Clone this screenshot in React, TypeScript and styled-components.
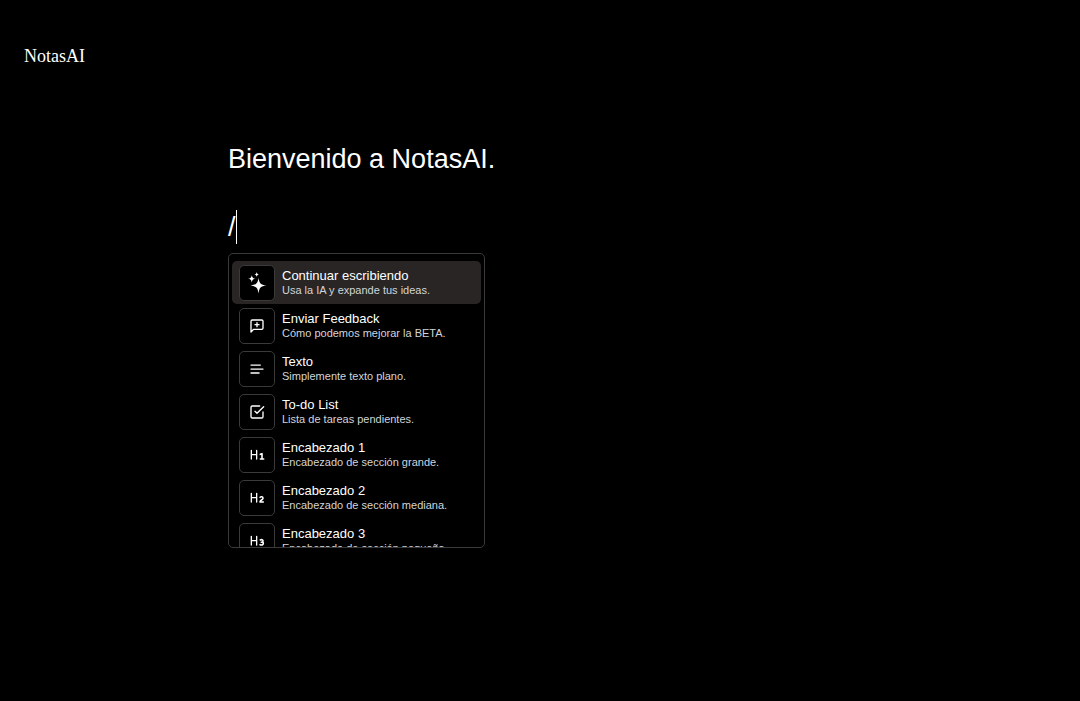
import React from 'react';
import styled, { createGlobalStyle } from 'styled-components';

const GlobalStyle = createGlobalStyle`
  * { box-sizing: border-box; }
  body {
    margin: 0;
    background: #000;
    color: #fff;
    font-family: "Liberation Sans", Arial, sans-serif;
  }
`;

const Header = styled.header`
  display: flex;
  padding: 46px 24px 0;
`;

const Brand = styled.a`
  color: #fff;
  font: 18px/20px "Liberation Serif", "Times New Roman", serif;
  text-decoration: none;
`;

const Editor = styled.main`
  max-width: 624px;
  margin: 0 auto;
  padding-top: 76px;
`;

const Title = styled.h1`
  margin: 0 0 32px;
  font-size: 27px;
  line-height: 34px;
  font-weight: 400;
`;

const CommandLine = styled.div`
  display: flex;
  align-items: center;
  font-size: 27px;
  line-height: 38px;
`;

const Caret = styled.span`
  width: 1px;
  height: 34px;
  background: #fff;
`;

const Menu = styled.div`
  width: 257px;
  height: 295px;
  margin-top: 7px;
  padding: 7px 3px;
  overflow: hidden;
  border: 1px solid #3a3a3a;
  border-radius: 5px;
`;

const Item = styled.button<{ $active?: boolean }>`
  display: flex;
  align-items: center;
  gap: 7px;
  width: 100%;
  height: 43px;
  padding: 0 7px;
  border: 0;
  border-radius: 5px;
  background: ${(p) => (p.$active ? '#292524' : 'transparent')};
  color: #fff;
  font-family: inherit;
  text-align: left;
  cursor: pointer;
`;

const IconBox = styled.span`
  display: flex;
  flex: none;
  align-items: center;
  justify-content: center;
  width: 36px;
  height: 36px;
  border: 1px solid #3a3a3a;
  border-radius: 5px;
  background: #000;
`;

const Labels = styled.span`
  display: flex;
  flex-direction: column;
  white-space: nowrap;
`;

const Name = styled.span`
  font-size: 13px;
  line-height: 15px;
`;

const Description = styled.span`
  color: #d1d5db;
  font-size: 11px;
  line-height: 15px;
`;

const Icon = ({ children }: { children: React.ReactNode }) => (
  <svg
    width="16"
    height="16"
    viewBox="0 0 24 24"
    fill="none"
    stroke="currentColor"
    strokeWidth="2"
    strokeLinecap="round"
    strokeLinejoin="round"
    aria-hidden="true"
  >
    {children}
  </svg>
);

const HeadingIcon = ({ digit }: { digit: string }) => (
  <Icon>
    <path d="M3.5 11.5h8M3.5 18V5M11.5 18V5" />
    <path d={digit} strokeWidth="2.4" />
  </Icon>
);

const Sparkles = () => (
  <svg width="20" height="22" viewBox="0 0 20 22" fill="currentColor" aria-hidden="true">
    <path d="M11.5 6C12.4 11.5 13.500 12.600 19.500 13.500C13.500 14.400 12.400 15.500 11.500 21.500C10.600 15.500 9.500 14.400 3.500 13.500C9.500 12.600 10.600 11.500 11.500 6Z" />
    <path d="M4.800 3.200C5.300 5.800 6 6.400 8.500 6.800C6 7.200 5.300 7.800 4.800 10.400C4.300 7.800 3.600 7.200 1 6.800C3.600 6.400 4.300 5.800 4.800 3.200Z" />
    <path d="M9.700 0C10 1.700 10.500 2.200 12 2.400C10.500 2.700 10 3.200 9.700 4.800C9.400 3.200 8.900 2.700 7.300 2.400C8.900 2.200 9.400 1.700 9.700 0Z" />
  </svg>
);

const items = [
  { name: 'Continuar escribiendo', description: 'Usa la IA y expande tus ideas.', icon: <Sparkles /> },
  {
    name: 'Enviar Feedback',
    description: 'Cómo podemos mejorar la BETA.',
    icon: (
      <Icon>
        <path d="M21 15a2 2 0 0 1-2 2H7l-4 4V5a2 2 0 0 1 2-2h14a2 2 0 0 1 2 2z" />
        <path d="M9 10h6M12 7v6" />
      </Icon>
    ),
  },
  {
    name: 'Texto',
    description: 'Simplemente texto plano.',
    icon: (
      <Icon>
        <path d="M17 6.1H3M21 12.1H3M15.1 18H3" />
      </Icon>
    ),
  },
  {
    name: 'To-do List',
    description: 'Lista de tareas pendientes.',
    icon: (
      <Icon>
        <path d="m9 11 3 3L22 4" />
        <path d="M21 12v7a2 2 0 0 1-2 2H5a2 2 0 0 1-2-2V5a2 2 0 0 1 2-2h11" />
      </Icon>
    ),
  },
  {
    name: 'Encabezado 1',
    description: 'Encabezado de sección grande.',
    icon: <HeadingIcon digit="M17 11l2.500-1v8M17 18h5" />,
  },
  {
    name: 'Encabezado 2',
    description: 'Encabezado de sección mediana.',
    icon: <HeadingIcon digit="M21.500 18h-5c0-3 4.500-3 4.500-5.700 0-2.300-3-2.800-4.300-1.300" />,
  },
  {
    name: 'Encabezado 3',
    description: 'Encabezado de sección pequeña.',
    icon: <HeadingIcon digit="M17 10.500c1.800-1.200 4-.5 4 1.300a2 2 0 0 1-2.500 2M16.700 17.500c2.200 1.100 4.800.3 4.800-1.700a2 2 0 0 0-3-2" />,
  },
];

export default function App() {
  return (
    <>
      <GlobalStyle />
      <Header>
        <Brand href="#">NotasAI</Brand>
      </Header>
      <Editor>
        <Title>Bienvenido a NotasAI.</Title>
        <CommandLine>
          /<Caret />
        </CommandLine>
        <Menu>
          {items.map((item, index) => (
            <Item key={item.name} type="button" $active={index === 0}>
              <IconBox>{item.icon}</IconBox>
              <Labels>
                <Name>{item.name}</Name>
                <Description>{item.description}</Description>
              </Labels>
            </Item>
          ))}
        </Menu>
      </Editor>
    </>
  );
}
